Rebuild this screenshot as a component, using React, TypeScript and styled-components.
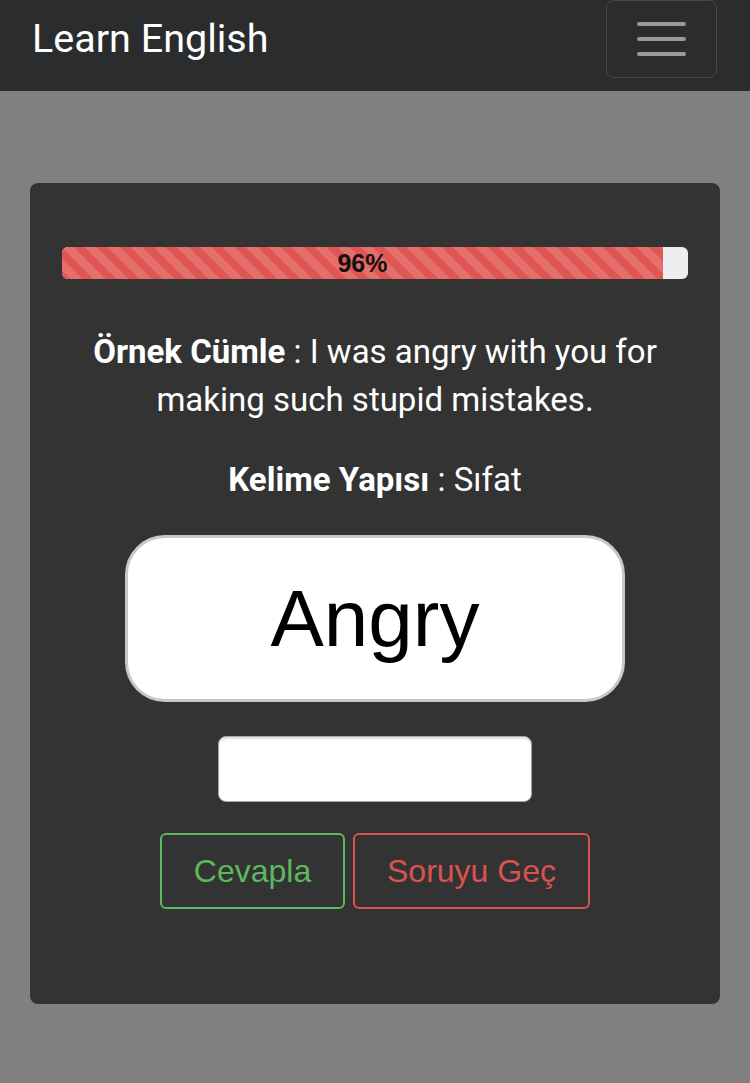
import React from "react";
import styled, { createGlobalStyle } from "styled-components";

const Global = createGlobalStyle`
  html, body { margin: 0; padding: 0; }
  body {
    background: #808080;
    font-family: Roboto, "Noto Sans", sans-serif;
    min-height: 1083px;
  }
  * { box-sizing: border-box; }
`;

const Navbar = styled.nav`
  height: 91px;
  background: #2b2c2e;
  display: flex;
  align-items: flex-start;
  justify-content: space-between;
  padding: 0 33px 0 32px;
`;

const Brand = styled.div`
  color: #ffffff;
  font-size: 39.5px;
  line-height: 78px;
  font-family: Roboto, sans-serif;
`;

const Toggler = styled.button`
  width: 111px;
  height: 78px;
  background: transparent;
  border: 1.5px solid #46474a;
  border-radius: 8px;
  display: flex;
  flex-direction: column;
  align-items: center;
  justify-content: center;
  gap: 11px;
  padding: 0;
`;

const Bar = styled.span`
  display: block;
  width: 49px;
  height: 4px;
  border-radius: 2px;
  background: #9a9a9b;
`;

const Main = styled.main`
  padding: 92px 30px 0 30px;
`;

const Card = styled.section`
  background: #333333;
  border-radius: 8px;
  padding: 64px 32px 95px 32px;
  display: flex;
  flex-direction: column;
  align-items: center;
`;

const Progress = styled.div`
  width: 100%;
  height: 32px;
  border-radius: 6px;
  background: #eceef0;
  overflow: hidden;
  display: flex;
`;

const ProgressFill = styled.div`
  height: 100%;
  background-color: #e05654;
  background-image: linear-gradient(
    45deg,
    rgba(255, 255, 255, 0.15) 25%,
    transparent 25%,
    transparent 50%,
    rgba(255, 255, 255, 0.15) 50%,
    rgba(255, 255, 255, 0.15) 75%,
    transparent 75%,
    transparent
  );
  background-size: 23px 23px;
  display: flex;
  align-items: center;
  justify-content: center;
  color: #111;
  font-family: "Liberation Sans", Arial, sans-serif;
  font-weight: bold;
  font-size: 25px;
`;

const Sentence = styled.p`
  margin: 49px 0 0 0;
  color: #ffffff;
  font-size: 33px;
  line-height: 48px;
  text-align: center;
  padding: 0 10px;
`;

const Info = styled.p`
  margin: 32px 0 0 0;
  color: #ffffff;
  font-size: 33px;
  line-height: 48px;
  text-align: center;
`;

const Label = styled.b`
  font-weight: 700;
`;

const WordBox = styled.div`
  margin-top: 31px;
  width: 500px;
  height: 167px;
  background: #ffffff;
  border: 3px solid #c8c8c8;
  border-radius: 40px;
  display: flex;
  align-items: center;
  justify-content: center;
  font-family: "Liberation Sans", Arial, sans-serif;
  font-size: 80px;
  color: #000;
`;

const AnswerInput = styled.input`
  margin-top: 34px;
  width: 314px;
  height: 66px;
  background: #ffffff;
  border: 1.5px solid #a8a8a8;
  border-radius: 8px;
  box-shadow: inset 0 2px 2px rgba(0, 0, 0, 0.12);
  font-size: 28px;
  outline: none;
`;

const Buttons = styled.div`
  margin-top: 31px;
  display: flex;
  gap: 8px;
`;

const OutlineButton = styled.button<{ $color: string; $w: number }>`
  width: ${(p) => p.$w}px;
  height: 76px;
  background: transparent;
  border: 2px solid ${(p) => p.$color};
  color: ${(p) => p.$color};
  border-radius: 6px;
  font-family: "Liberation Sans", Arial, sans-serif;
  font-size: 32px;
  padding: 0;
`;

export default function App() {
  return (
    <>
      <Global />
      <Navbar>
        <Brand>Learn English</Brand>
        <Toggler aria-label="menu">
          <Bar />
          <Bar />
          <Bar />
        </Toggler>
      </Navbar>
      <Main>
        <Card>
          <Progress>
            <ProgressFill style={{ width: "96%" }}>96%</ProgressFill>
          </Progress>
          <Sentence>
            <Label>Örnek Cümle</Label> : I was angry with you for making such stupid mistakes.
          </Sentence>
          <Info>
            <Label>Kelime Yapısı</Label> : Sıfat
          </Info>
          <WordBox>Angry</WordBox>
          <AnswerInput type="text" />
          <Buttons>
            <OutlineButton $color="#5cb85c" $w={185}>Cevapla</OutlineButton>
            <OutlineButton $color="#d9534f" $w={237}>Soruyu Geç</OutlineButton>
          </Buttons>
        </Card>
      </Main>
    </>
  );
}
